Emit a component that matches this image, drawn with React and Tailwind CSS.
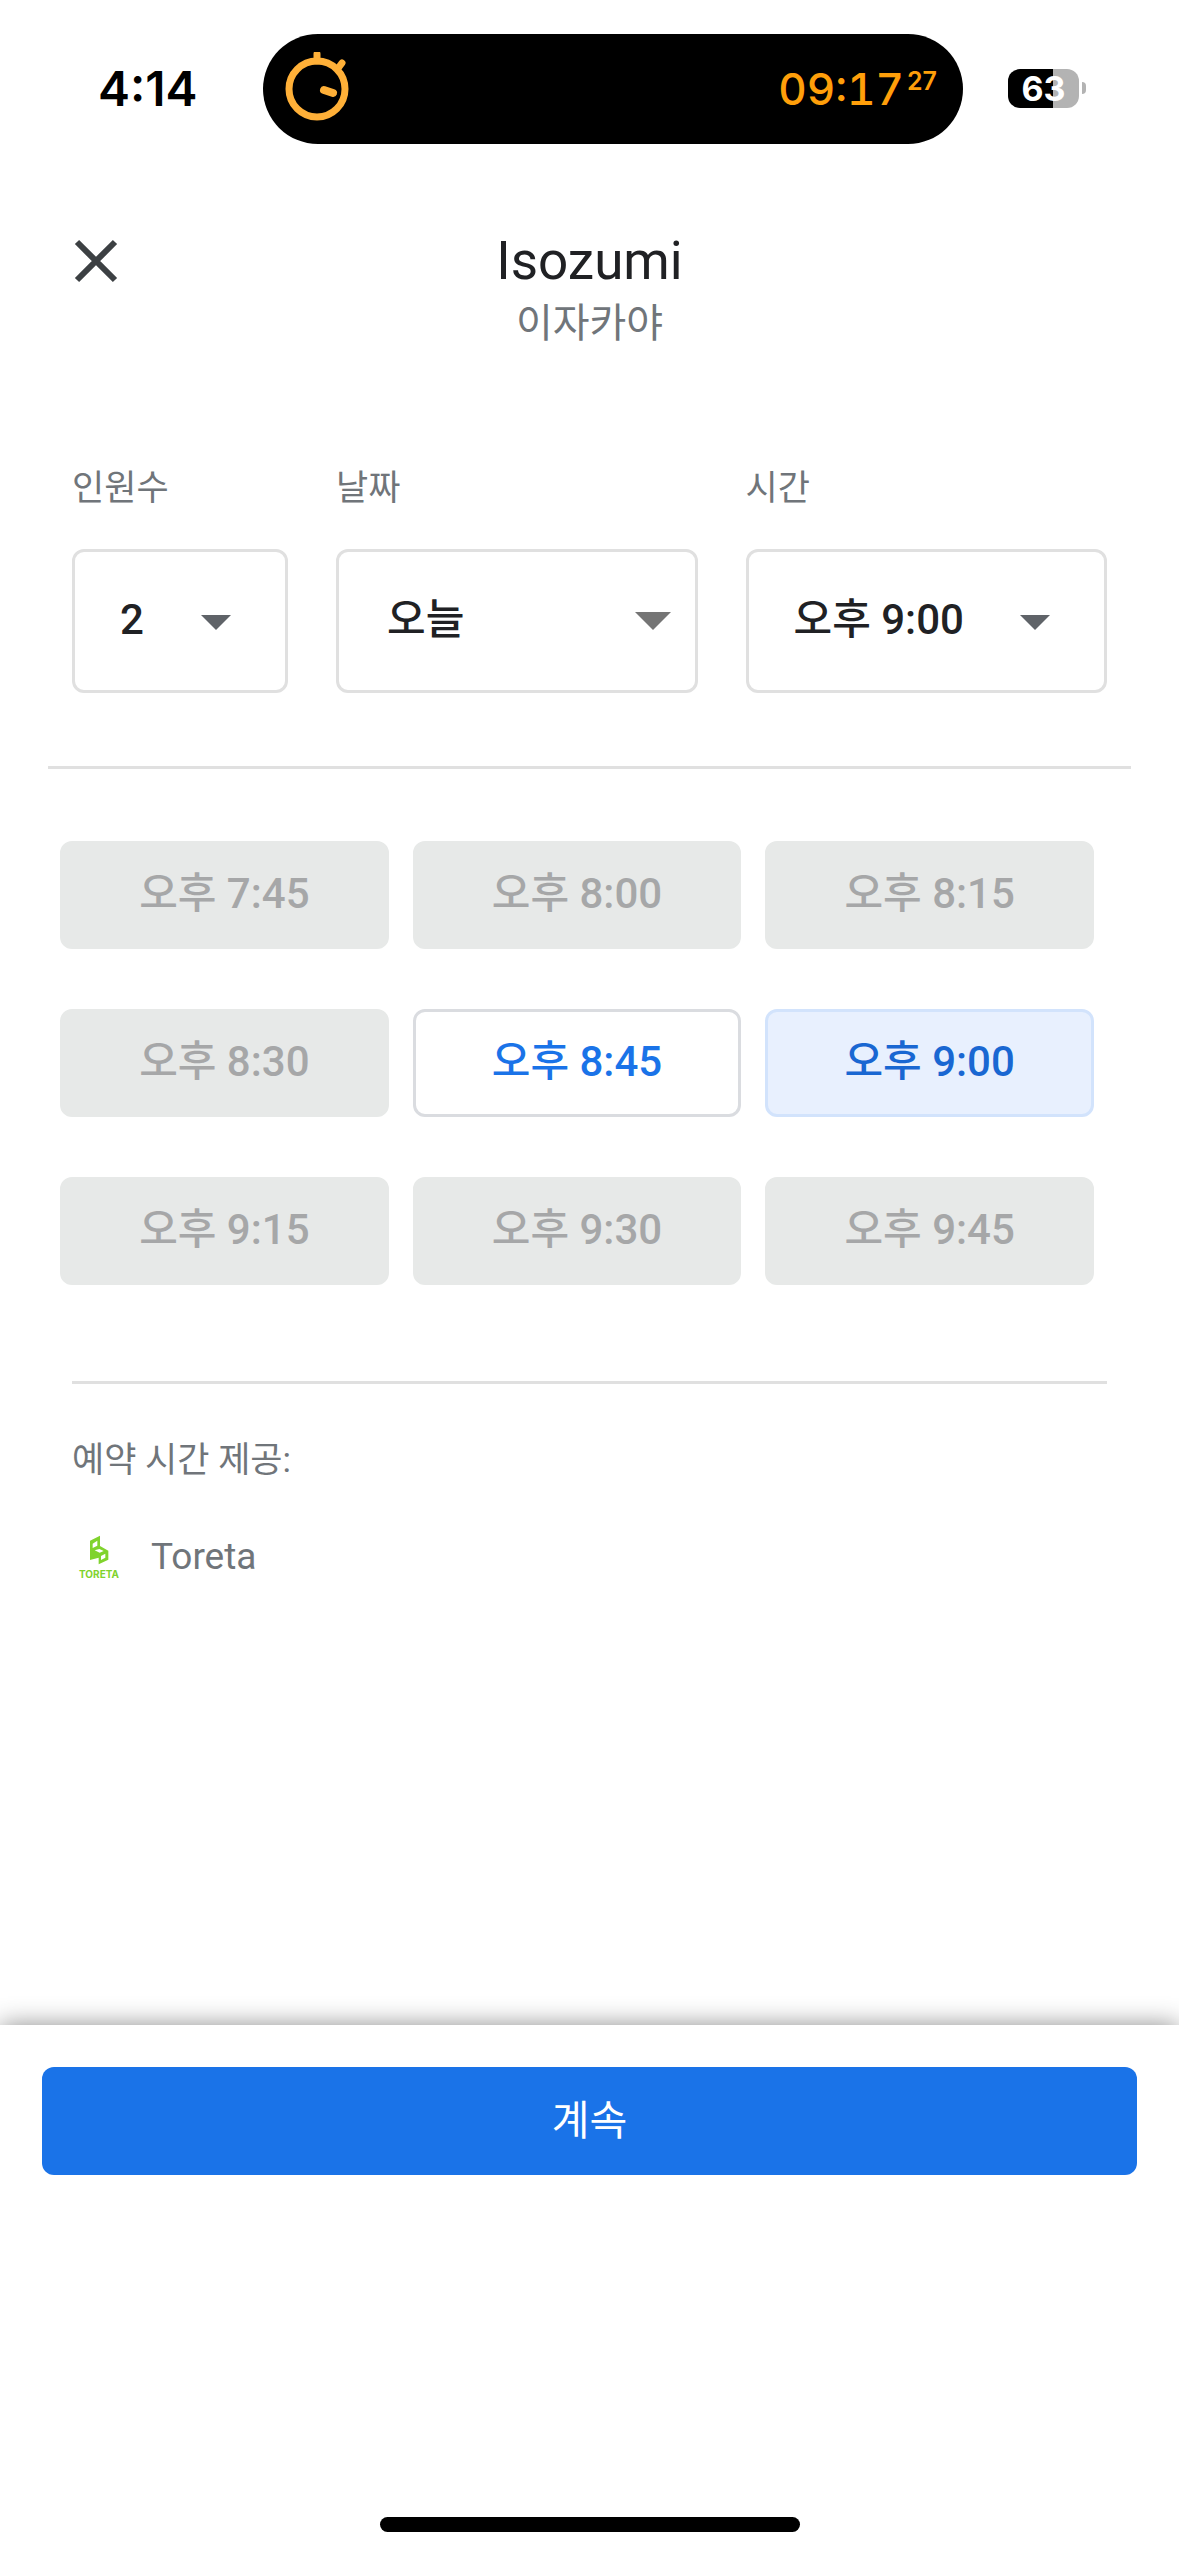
import React, { useState } from "react";

const SLOTS = [
  { time: "오후 7:45", available: false },
  { time: "오후 8:00", available: false },
  { time: "오후 8:15", available: false },
  { time: "오후 8:30", available: false },
  { time: "오후 8:45", available: true },
  { time: "오후 9:00", available: true },
  { time: "오후 9:15", available: false },
  { time: "오후 9:30", available: false },
  { time: "오후 9:45", available: false },
];

const StopwatchIcon = () => (
  <svg
    viewBox="0 0 66 74"
    className="h-[74px] w-[66px]"
    fill="none"
    stroke="#ffb038"
    strokeLinecap="round"
    aria-hidden="true"
  >
    <circle cx="32" cy="37" r="28" strokeWidth="7" />
    <path d="M32 2v7M54 15l3-4" strokeWidth="7" />
    <path d="M39 38l9 3" strokeWidth="8" />
  </svg>
);

const ToretaLogo = () => (
  <div className="flex w-12 flex-col items-center gap-1 text-[#80d32d]">
    <svg viewBox="268 528 58 90" className="h-[30px] w-5" aria-hidden="true">
      <path
        fill="currentColor"
        fillRule="evenodd"
        d="M270 545L300 530V561L325 575V602L296 616V596L270 603ZM278 554V567L292 560V545ZM284 574L299 581L311 576L298 570ZM303 591V603L316 596V584Z"
      />
    </svg>
    <span className="font-['Inter',sans-serif] text-[10px] leading-[10px] font-bold">
      TORETA
    </span>
  </div>
);

const StatusBar = () => (
  <div className="flex items-center pt-[34px] font-['Inter',sans-serif]">
    <div className="w-[263px] pl-[98px] text-[48px] leading-[56px] font-semibold text-black">
      4:14
    </div>
    <div className="flex h-[110px] flex-1 items-center justify-between rounded-full bg-black pr-[26px] pl-[22px]">
      <StopwatchIcon />
      <div className="flex items-start gap-[3px] text-[#ff9f0a]">
        <span className="text-[44px] leading-[60px] font-medium tabular-nums">
          09:17
        </span>
        <span className="pt-2 text-[25px] leading-7 font-semibold">27</span>
      </div>
    </div>
    <div className="flex w-[216px] items-center gap-[3px] pb-0.5 pl-[45px]">
      <div className="flex h-[39px] w-[71px] items-center justify-center rounded-xl bg-linear-to-r from-black from-63% to-[#b3b3b3] to-63% text-[34px] leading-[39px] font-bold text-white">
        63
      </div>
      <div className="h-3 w-1 rounded-r-full bg-[#b3b3b3]" />
    </div>
  </div>
);

const SelectField = ({
  id,
  label,
  value,
  options,
  onChange,
  className,
  selectClass,
  arrowClass,
}) => (
  <div className={className}>
    <label
      htmlFor={id}
      className="block text-[35px] leading-[48px] text-[#70757a]"
    >
      {label}
    </label>
    <div className="relative mt-9">
      <select
        id={id}
        value={value}
        onChange={(e) => onChange(e.target.value)}
        className={`h-36 w-full appearance-none rounded-xl border-3 border-[#e0e0e0] bg-white pr-16 pb-1 text-[42px] font-medium text-[#202124] ${selectClass}`}
      >
        {options.map((option) => (
          <option key={option} value={option}>
            {option}
          </option>
        ))}
      </select>
      <svg
        viewBox="0 0 30 15"
        className={`pointer-events-none absolute ${arrowClass}`}
        fill="currentColor"
        aria-hidden="true"
      >
        <path d="M0 0h30L15 15z" />
      </svg>
    </div>
  </div>
);

const SlotButton = ({ slot, selected, onSelect }) => {
  let look = "border-[#dadce0] bg-white text-[#1a73e8]";
  if (!slot.available) {
    look = "border-[#e7e9e8] bg-[#e7e9e8] text-[#a6a7a8]";
  } else if (selected) {
    look = "border-[#d2e3fc] bg-[#e8f0fe] text-[#1967d2]";
  }

  return (
    <button
      type="button"
      disabled={!slot.available}
      onClick={() => onSelect(slot.time)}
      className={`h-[108px] rounded-xl border-3 pb-0.5 text-[42px] leading-[60px] font-medium ${look}`}
    >
      {slot.time}
    </button>
  );
};

const App = () => {
  const [people, setPeople] = useState("2");
  const [date, setDate] = useState("오늘");
  const [time, setTime] = useState("오후 9:00");

  return (
    <div className="flex min-h-screen flex-col bg-white font-['Roboto','Noto_Sans_CJK_KR',sans-serif]">
      <StatusBar />

      <header className="grid grid-cols-[1fr_auto_1fr] px-[72px] pt-[87px]">
        <button type="button" aria-label="닫기" className="h-[60px] w-12">
          <svg
            viewBox="0 0 48 48"
            className="size-12"
            stroke="#3c4043"
            strokeWidth="6"
            aria-hidden="true"
          >
            <path d="M5 5l38 38M43 5L5 43" />
          </svg>
        </button>
        <div className="text-center">
          <h1 className="text-[53px] leading-[60px] text-[#202124]">Isozumi</h1>
          <p className="text-[40px] leading-[66px] text-[#70757a]">이자카야</p>
        </div>
      </header>

      <main className="flex-1">
        <div className="flex gap-12 px-[72px] pt-[108px]">
          <SelectField
            id="people"
            label="인원수"
            value={people}
            options={["1", "2", "3", "4", "5", "6"]}
            onChange={setPeople}
            className="w-[216px]"
            selectClass="pl-[45px]"
            arrowClass="top-[66px] right-[57px] h-[15px] w-[30px] text-[#5f6368]"
          />
          <SelectField
            id="date"
            label="날짜"
            value={date}
            options={["오늘", "내일"]}
            onChange={setDate}
            className="flex-1"
            selectClass="pl-12"
            arrowClass="top-[63px] right-[27px] h-[18px] w-9 text-[#757575]"
          />
          <SelectField
            id="time"
            label="시간"
            value={time}
            options={SLOTS.map((slot) => slot.time)}
            onChange={setTime}
            className="flex-1"
            selectClass="pl-[45px]"
            arrowClass="top-[66px] right-[57px] h-[15px] w-[30px] text-[#5f6368]"
          />
        </div>

        <hr className="mx-12 mt-[73px] border-t-3 border-[#e0e0e0]" />

        <div className="mt-[72px] grid grid-cols-3 gap-x-6 gap-y-[60px] pr-[85px] pl-[60px]">
          {SLOTS.map((slot) => (
            <SlotButton
              key={slot.time}
              slot={slot}
              selected={slot.time === time}
              onSelect={setTime}
            />
          ))}
        </div>

        <section className="mx-[72px] mt-24 border-t-3 border-[#e0e0e0] pt-[53px] text-[#70757a]">
          <p className="text-[35px] leading-[48px]">예약 시간 제공:</p>
          <div className="mt-[42px] flex items-center gap-7 pl-[3px]">
            <ToretaLogo />
            <span className="text-[37px] leading-[60px]">Toreta</span>
          </div>
        </section>
      </main>

      <footer className="flex h-[531px] flex-col items-center justify-between bg-white px-[42px] pt-[42px] pb-6 shadow-[0_0_24px_rgba(0,0,0,0.45)]">
        <button
          type="button"
          className="h-[108px] w-full rounded-xl bg-[#1a73e8] text-[41px] leading-[60px] text-white"
        >
          계속
        </button>
        <div className="h-[15px] w-[420px] rounded-full bg-black" />
      </footer>
    </div>
  );
};

export default App;
